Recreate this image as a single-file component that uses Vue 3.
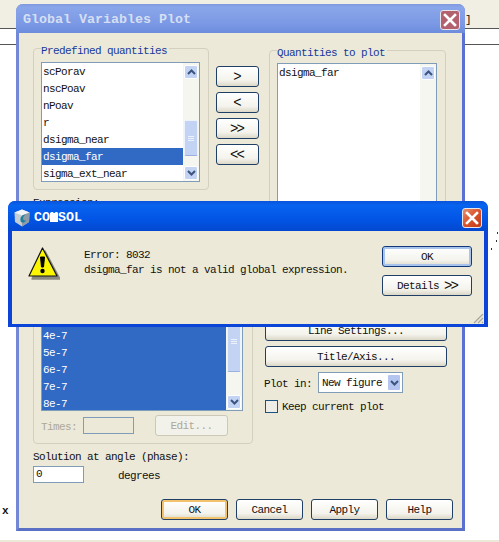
<script setup>
const predefined = ['scPorav', 'nscPoav', 'nPoav', 'r', 'dsigma_near', 'dsigma_far', 'sigma_ext_near']
const times = ['1e-7', '2e-7', '3e-7', '4e-7', '5e-7', '6e-7', '7e-7', '8e-7']
const moveButtons = ['>', '<', '>>', '<<']
const footerButtons = ['OK', 'Cancel', 'Apply', 'Help']
</script>

<template>
<div class="screen">
    <div class="top-strip"></div>
    <div class="tool-strip"></div>
    <div class="spacer"></div>
    <div class="bottom-strip"></div>

    <span class="stray stray-bracket">]</span>
    <span class="stray stray-x">x</span>
    <i class="speck speck-a"></i>
    <i class="speck speck-b"></i>
    <i class="speck speck-c"></i>

    <!-- back dialog -->
    <div class="window plot-window">
        <div class="plot-title">
            <span>Global Variables Plot</span>
            <div class="close close-faded">
                <svg width="14" height="14" viewBox="0 0 14 14"><path d="M2 2 L12 12 M12 2 L2 12" stroke="#fff" stroke-width="2.6" stroke-linecap="square" /></svg>
            </div>
        </div>
        <div class="plot-body">
            <div class="upper">
                <div class="upper-left">
                    <div class="group group-predefined">
                        <span class="legend">Predefined quantities</span>
                        <div class="list list-predefined">
                            <div class="rows">
                                <div class="row" v-for="name in predefined" :class="{selected: name == 'dsigma_far'}">{{name}}</div>
                            </div>
                            <div class="scroll">
                                <div class="arrow">
                                    <svg width="9" height="6" viewBox="0 0 9 6"><path d="M1 5 L4.5 1.5 L8 5" fill="none" stroke="#3b5580" stroke-width="2" /></svg>
                                </div>
                                <div class="track">
                                    <div class="thumb thumb-predefined"><i></i><i></i><i></i></div>
                                </div>
                                <div class="arrow">
                                    <svg width="9" height="6" viewBox="0 0 9 6"><path d="M1 1 L4.5 4.5 L8 1" fill="none" stroke="#3b5580" stroke-width="2" /></svg>
                                </div>
                            </div>
                        </div>
                    </div>
                    <div class="label expression">Expression:</div>
                </div>
                <div class="move-buttons">
                    <div class="btn move" v-for="b in moveButtons">{{b}}</div>
                </div>
                <div class="group group-plot">
                    <span class="legend">Quantities to plot</span>
                    <div class="list list-plot">
                        <div class="rows">
                            <div class="row">dsigma_far</div>
                        </div>
                        <div class="scroll">
                            <div class="arrow">
                                <svg width="9" height="6" viewBox="0 0 9 6"><path d="M1 5 L4.5 1.5 L8 5" fill="none" stroke="#3b5580" stroke-width="2" /></svg>
                            </div>
                            <div class="track"></div>
                        </div>
                    </div>
                </div>
            </div>

            <div class="lower">
                <div class="group group-times">
                    <div class="list list-times">
                        <div class="rows rows-end">
                            <div class="row selected" v-for="t in times">{{t}}</div>
                        </div>
                        <div class="scroll">
                            <div class="track track-times">
                                <div class="thumb thumb-times"><i></i><i></i><i></i></div>
                            </div>
                            <div class="arrow">
                                <svg width="9" height="6" viewBox="0 0 9 6"><path d="M1 1 L4.5 4.5 L8 1" fill="none" stroke="#3b5580" stroke-width="2" /></svg>
                            </div>
                        </div>
                    </div>
                    <div class="times-row">
                        <span class="label disabled times-label">Times:</span>
                        <div class="input input-disabled"></div>
                        <div class="btn btn-disabled">Edit...</div>
                    </div>
                </div>
                <div class="side">
                    <div class="btn side-btn">Line Settings...</div>
                    <div class="btn side-btn">Title/Axis...</div>
                    <div class="plot-in">
                        <span class="label plot-label">Plot in:</span>
                        <div class="select">
                            <span>New figure</span>
                            <div class="arrow select-arrow">
                                <svg width="9" height="6" viewBox="0 0 9 6"><path d="M1 1 L4.5 4.5 L8 1" fill="none" stroke="#3b5580" stroke-width="2" /></svg>
                            </div>
                        </div>
                    </div>
                    <div class="keep">
                        <div class="checkbox"></div>
                        <span class="label">Keep current plot</span>
                    </div>
                </div>
            </div>

            <div class="label solution-label">Solution at angle (phase):</div>
            <div class="solution-row">
                <div class="input">0</div>
                <span class="label degrees">degrees</span>
            </div>

            <div class="footer">
                <div class="btn footer-btn" v-for="b in footerButtons" :class="{'btn-default': b == 'OK'}">{{b}}</div>
            </div>
        </div>
    </div>

    <!-- error dialog on top -->
    <div class="window error-window">
        <div class="error-title">
            <svg class="app-icon" width="18" height="18" viewBox="0 0 18 18">
                <path d="M9 0.5 L16.5 3.5 L16 13 L9 17.5 L2 13 L1.5 3.5 Z" fill="#c4ccd4" />
                <path d="M1.5 3.5 L9 0.5 L16.5 3.5 L9 6.5 Z" fill="#f1f3f6" />
                <path d="M9 6.5 L16.5 3.5 L16 13 L9 17.5 Z" fill="#8e9aa6" />
                <path d="M13 5.5 C8 5.5 6.5 9.5 8 13 C10 14.5 12.5 13 13 11 C11.5 12 10 11 10 9.5 C10 8 11 6.5 13 5.5 Z" fill="#1f7f9c" />
            </svg>
            <span class="error-caption">CO<span class="blot">M</span>SOL</span>
            <div class="close close-active">
                <svg width="14" height="14" viewBox="0 0 14 14"><path d="M2 2 L12 12 M12 2 L2 12" stroke="#fff" stroke-width="2.6" stroke-linecap="square" /></svg>
            </div>
        </div>
        <div class="error-body">
            <svg class="warning" width="32" height="34" viewBox="0 0 32 34">
                <path d="M17 5 L32 33 L4 33 Z" fill="#8a8a80" stroke="#8a8a80" stroke-width="1.5" stroke-linejoin="round" />
                <path d="M14.5 2 L29 30 L1 30 Z" fill="#fbf500" stroke="#111" stroke-width="1.2" stroke-linejoin="round" />
                <path d="M12.5 11 L16.5 11 L15.5 21 L13.5 21 Z" fill="#000" stroke="#000" stroke-width="1" stroke-linejoin="round" />
                <circle cx="14.5" cy="25" r="2.2" fill="#000" />
            </svg>
            <div class="message">
                <div>Error: 8032</div>
                <div>dsigma_far is not a valid global expression.</div>
            </div>
            <div class="error-buttons">
                <div class="btn error-btn btn-focus">OK</div>
                <div class="btn error-btn">Details <span class="chevrons">&gt;&gt;</span></div>
            </div>
            <svg class="grip" width="11" height="11" viewBox="0 0 11 11">
                <path d="M10 1 L1 10 M10 5 L5 10 M10 9 L9 10" stroke="#a8a69a" stroke-width="1.2" fill="none" />
            </svg>
        </div>
    </div>
</div>
</template>

<style scoped>
.screen {
    position: relative;
    display: flex;
    flex-direction: column;
    width: 499px;
    height: 542px;
    overflow: hidden;
    background-color: #fff;
    color: #111;
    font-family: "Liberation Mono", "DejaVu Sans Mono", monospace;
    font-size: 11px;
    letter-spacing: -0.6px;
    line-height: 14px;
}
.top-strip {
    height: 28px;
    flex: none;
    background-color: #f1efe3;
    border-bottom: 1px solid #555;
}
.tool-strip {
    height: 15px;
    flex: none;
    border-bottom: 1px solid #555;
}
.spacer {
    flex: 1;
}
.bottom-strip {
    height: 2px;
    flex: none;
    background-color: #ece9d8;
}
.stray {
    position: absolute;
}
.stray-bracket {
    left: 465px;
    top: 13px;
}
.stray-x {
    left: 2px;
    top: 504px;
    font-weight: bold;
}
.speck {
    position: absolute;
    width: 1px;
    height: 2px;
    background-color: #333;
}
.speck-a {
    left: 497px;
    top: 232px;
}
.speck-b {
    left: 496px;
    top: 240px;
}
.speck-c {
    left: 491px;
    top: 248px;
}

.window {
    position: absolute;
    box-sizing: border-box;
}
.plot-window {
    left: 16px;
    top: 4px;
    width: 449px;
    height: 527px;
    display: flex;
    flex-direction: column;
    background-color: #ece9d8;
    border-style: solid;
    border-color: #7288d6 #5c70d2 #5a70c4 #7288d6;
    border-width: 0 3px 3px 3px;
    border-radius: 7px 7px 0 0;
}
.plot-title {
    height: 29px;
    flex: none;
    box-sizing: border-box;
    display: flex;
    align-items: center;
    justify-content: space-between;
    margin: 0 -3px;
    padding: 2px 5px 0 7px;
    border-radius: 7px 7px 0 0;
    background: linear-gradient(#8098de, #8aa6ea 12%, #7a98e4 70%, #6d8cdc);
    color: #d6dff2;
    font-size: 13.33px;
    letter-spacing: 0;
    font-weight: bold;
}
.close {
    width: 20px;
    height: 20px;
    display: flex;
    align-items: center;
    justify-content: center;
    box-sizing: border-box;
    border-radius: 3px;
    border: 1px solid #e6e6ee;
}
.close-faded {
    background-color: #b4616f;
}
.close-active {
    margin-top: 1px;
    background: linear-gradient(135deg, #e88f6c, #d8532b 50%, #c03c18);
}
.plot-body {
    flex: 1;
    padding: 15px 9px 0 14px;
}

.upper {
    display: flex;
    height: 192px;
}
.upper-left {
    width: 176px;
    flex: none;
}
.group {
    position: relative;
    box-sizing: border-box;
    border: 1px solid #d4d0bf;
    border-radius: 4px;
}
.legend {
    position: absolute;
    left: 7px;
    top: -5px;
    padding-right: 2px;
    background-color: #ece9d8;
    color: #17399c;
}
.group-predefined {
    height: 142px;
    padding: 13px 8px 0 7px;
}
.group-plot {
    width: 177px;
    height: 186px;
    margin: 2px 0 0 10px;
    padding: 12px 8px 0 7px;
}
.list {
    box-sizing: border-box;
    display: flex;
    background-color: #fff;
    border: 1px solid #7f9db9;
}
.list-predefined {
    height: 120px;
}
.list-plot {
    height: 165px;
}
.list-times {
    height: 149px;
}
.rows {
    flex: 1;
    min-width: 0;
    overflow: hidden;
}
.rows-end {
    display: flex;
    flex-direction: column;
    justify-content: flex-end;
}
.rows-end .row:last-child {
    margin-bottom: -2px;
}
.row {
    height: 17px;
    flex: none;
    line-height: 19px;
    padding-left: 1px;
}
.selected {
    background-color: #316ac5;
    color: #fff;
}
.scroll {
    width: 16px;
    flex: none;
    display: flex;
    flex-direction: column;
    background-color: #f6f6f0;
    padding: 2px 0 1px 1px;
    box-sizing: border-box;
}
.arrow {
    flex: none;
    height: 14px;
    width: 14px;
    display: flex;
    align-items: center;
    justify-content: center;
    box-sizing: border-box;
    background-color: #c3d3f3;
    border: 1px solid #fff;
    border-radius: 2px;
}
.track {
    flex: 1;
    min-height: 0;
    overflow: hidden;
}
.track-times {
    display: flex;
    flex-direction: column;
    justify-content: flex-end;
    padding-bottom: 23px;
}
.thumb {
    box-sizing: border-box;
    width: 14px;
    display: flex;
    flex-direction: column;
    justify-content: center;
    align-items: center;
    gap: 1px;
    background-color: #c3d3f3;
    border: 1px solid #eef2fb;
    border-bottom-color: #9bb0e0;
    border-radius: 2px;
}
.thumb i {
    display: block;
    width: 6px;
    height: 1px;
    background-color: #eef2fb;
}
.thumb-predefined {
    height: 36px;
    margin-top: 41px;
}
.thumb-times {
    height: 62px;
    flex: none;
}
.label {
    height: 14px;
    line-height: 16px;
}
.disabled {
    color: #aca899;
}
.expression {
    margin-top: 5px;
}
.move-buttons {
    width: 43px;
    flex: none;
    display: flex;
    flex-direction: column;
    gap: 5px;
    margin: 18px 0 0 7px;
}
.btn {
    box-sizing: border-box;
    height: 21px;
    flex: none;
    display: flex;
    align-items: center;
    justify-content: center;
    padding-top: 1px;
    border: 1px solid #1f3f66;
    border-radius: 3px;
    background: linear-gradient(#fff, #f4f3ec 70%, #dcd8c8);
}
.move {
    font-size: 14px;
    letter-spacing: -2px;
    padding-top: 0;
    padding-right: 2px;
}
.chevrons {
    font-size: 14px;
    letter-spacing: -2px;
    margin-left: 5px;
}

.lower {
    display: flex;
    gap: 12px;
    height: 204px;
}
.group-times {
    width: 220px;
    flex: none;
    margin-top: 5px;
    padding: 16px 9px 0 7px;
    height: 199px;
}
.times-row {
    display: flex;
    align-items: center;
    margin-top: 4px;
}
.times-label {
    width: 42px;
}
.input {
    box-sizing: border-box;
    width: 51px;
    height: 17px;
    line-height: 15px;
    padding-left: 2px;
    background-color: #fff;
    border: 1px solid #7f9db9;
}
.input-disabled {
    background-color: #ece9d8;
}
.btn-disabled {
    width: 73px;
    margin-left: 21px;
    color: #aca899;
    border-color: #cbc8b8;
    background: #f3f2ea;
}
.side {
    width: 182px;
    flex: none;
    display: flex;
    flex-direction: column;
    padding-top: 80px;
}
.side-btn {
    margin-bottom: 5px;
}
.plot-in {
    display: flex;
    align-items: center;
}
.plot-label {
    width: 54px;
    margin-left: -1px;
}
.select {
    box-sizing: border-box;
    width: 85px;
    height: 21px;
    display: flex;
    align-items: center;
    justify-content: space-between;
    padding: 0 1px 0 3px;
    background-color: #fff;
    border: 1px solid #7f9db9;
}
.select-arrow {
    height: 17px;
    width: 14px;
    background-color: #b4c6f0;
}
.keep {
    display: flex;
    align-items: center;
    gap: 4px;
    margin-top: 6px;
}
.checkbox {
    box-sizing: border-box;
    width: 13px;
    height: 13px;
    background-color: #eeeee6;
    border: 1px solid #1c5180;
}
.solution-label {
    margin-top: 5px;
}
.solution-row {
    display: flex;
    align-items: center;
    margin-top: 3px;
}
.degrees {
    margin-left: 34px;
}
.footer {
    display: flex;
    justify-content: flex-end;
    gap: 8px;
    margin-top: 16px;
}
.footer-btn {
    width: 67px;
}
.btn-default {
    box-shadow: inset 0 0 0 2px #f2c26c;
}

.error-window {
    left: 8px;
    top: 201px;
    width: 480px;
    height: 126px;
    display: flex;
    flex-direction: column;
    background-color: #0a45d8;
    padding: 0 4px 3px;
    border-radius: 7px 7px 0 0;
}
.error-title {
    height: 30px;
    flex: none;
    box-sizing: border-box;
    display: flex;
    align-items: center;
    margin: 0 -4px;
    padding: 3px 6px 0 5px;
    border-radius: 7px 7px 0 0;
    background: linear-gradient(#0a53dc, #0863ee 15%, #0255e6 60%, #0248cf);
    color: #fff;
}
.app-icon {
    margin-right: 3px;
    flex: none;
}
.error-caption {
    flex: 1;
    font-size: 13.33px;
    letter-spacing: 0;
    font-weight: bold;
}
.blot {
    display: inline-block;
    width: 8px;
    height: 9px;
    line-height: 9px;
    background-color: #fff;
}
.error-body {
    position: relative;
    flex: 1;
    display: flex;
    padding: 15px 12px 0 16px;
    background-color: #ece9d8;
}
.warning {
    flex: none;
    margin-right: 24px;
}
.message {
    flex: 1;
    line-height: 15px;
    margin-top: 2px;
}
.error-buttons {
    width: 90px;
    flex: none;
    display: flex;
    flex-direction: column;
    gap: 8px;
}
.error-btn {
    width: 90px;
}
.btn-focus {
    border-color: #12397c;
    box-shadow: inset 0 0 0 2px #a9c4ec;
}
.grip {
    position: absolute;
    right: 0;
    bottom: 0;
}
</style>
